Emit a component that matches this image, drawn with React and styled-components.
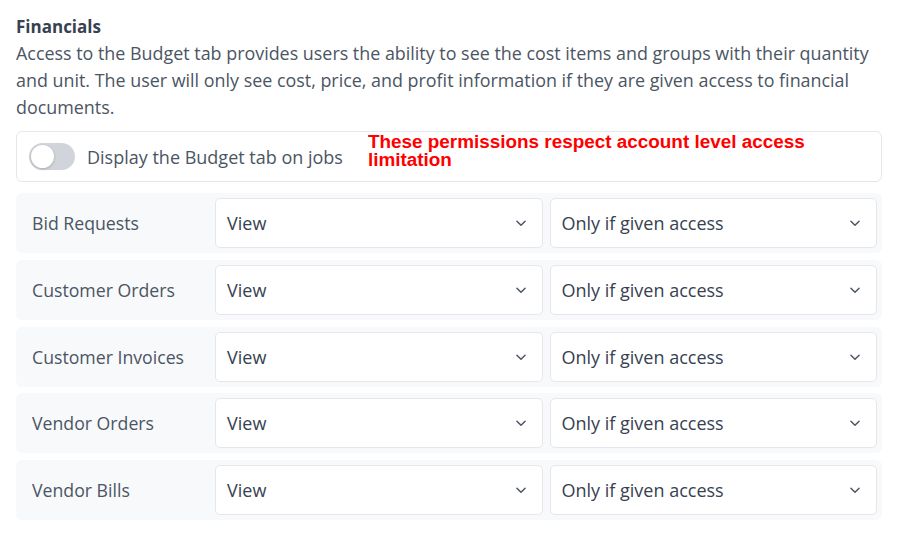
import React from "react";
import styled, { createGlobalStyle } from "styled-components";

const Global = createGlobalStyle`
  html, body { margin: 0; padding: 0; background: #ffffff; }
  body { font-family: "Open Sans", "Noto Sans", sans-serif; -webkit-font-smoothing: antialiased; }
  * { box-sizing: border-box; }
`;

const Page = styled.div`
  width: 904px;
  padding: 14px 22px 0 16px;
  display: flex;
  flex-direction: column;
`;

const Title = styled.h3`
  margin: 0;
  font-size: 17px;
  font-weight: 700;
  line-height: 26px;
  color: #374151;
`;

const Description = styled.p`
  margin: 0;
  font-size: 17.9px;
  line-height: 26.8px;
  color: #4b5563;
`;

const ToggleCard = styled.div`
  margin-top: 11px;
  height: 51px;
  border: 1px solid #e5e7eb;
  border-radius: 6px;
  display: flex;
  align-items: center;
  padding: 0 12px;
  gap: 12px;
`;

const Track = styled.span`
  width: 46px;
  height: 27px;
  border-radius: 14px;
  background: #d1d5db;
  position: relative;
  flex-shrink: 0;
`;

const Knob = styled.span`
  position: absolute;
  top: 2px;
  left: 2px;
  width: 23px;
  height: 23px;
  border-radius: 50%;
  background: #ffffff;
  box-shadow: 0 1px 3px rgba(0, 0, 0, 0.2);
`;

const ToggleLabel = styled.span`
  font-size: 18px;
  color: #4b5563;
  white-space: nowrap;
`;

const Notice = styled.span`
  margin-left: 13px;
  align-self: flex-start;
  margin-top: 1px;
  width: 470px;
  font-family: "Liberation Sans", Arial, sans-serif;
  font-weight: 700;
  font-size: 18.9px;
  line-height: 18px;
  color: #ff0000;
`;

const Rows = styled.div`
  margin-top: 11px;
  display: flex;
  flex-direction: column;
  gap: 6.6px;
`;

const Row = styled.div`
  display: grid;
  grid-template-columns: 176px 1fr 1fr;
  column-gap: 7px;
  align-items: center;
  background: #f8f9fb;
  border-radius: 6px;
  padding: 5px 5px 5px 16px;
`;

const RowLabel = styled.span`
  font-size: 17.7px;
  color: #4b5563;
  white-space: nowrap;
`;

const Select = styled.div`
  height: 50px;
  background: #ffffff;
  border: 1px solid #e5e7eb;
  border-radius: 5px;
  display: flex;
  align-items: center;
  justify-content: space-between;
  padding: 0 14px 0 11px;
  font-size: 18px;
  color: #374151;
`;

const Chevron = () => (
  <svg width="14" height="14" viewBox="0 0 24 24" fill="none" stroke="#4b5563" strokeWidth="2.5" strokeLinecap="round" strokeLinejoin="round">
    <path d="M5 9l7 7 7-7" />
  </svg>
);

const rows = ["Bid Requests", "Customer Orders", "Customer Invoices", "Vendor Orders", "Vendor Bills"];

export default function App() {
  return (
    <>
      <Global />
      <Page>
        <Title>Financials</Title>
        <Description>
          Access to the Budget tab provides users the ability to see the cost items and groups with their quantity and unit. The user will only see cost, price, and profit information if they are given access to financial documents.
        </Description>
        <ToggleCard>
          <Track><Knob /></Track>
          <ToggleLabel>Display the Budget tab on jobs</ToggleLabel>
          <Notice>These permissions respect account level access limitation</Notice>
        </ToggleCard>
        <Rows>
          {rows.map((r) => (
            <Row key={r}>
              <RowLabel>{r}</RowLabel>
              <Select>View<Chevron /></Select>
              <Select>Only if given access<Chevron /></Select>
            </Row>
          ))}
        </Rows>
      </Page>
    </>
  );
}
